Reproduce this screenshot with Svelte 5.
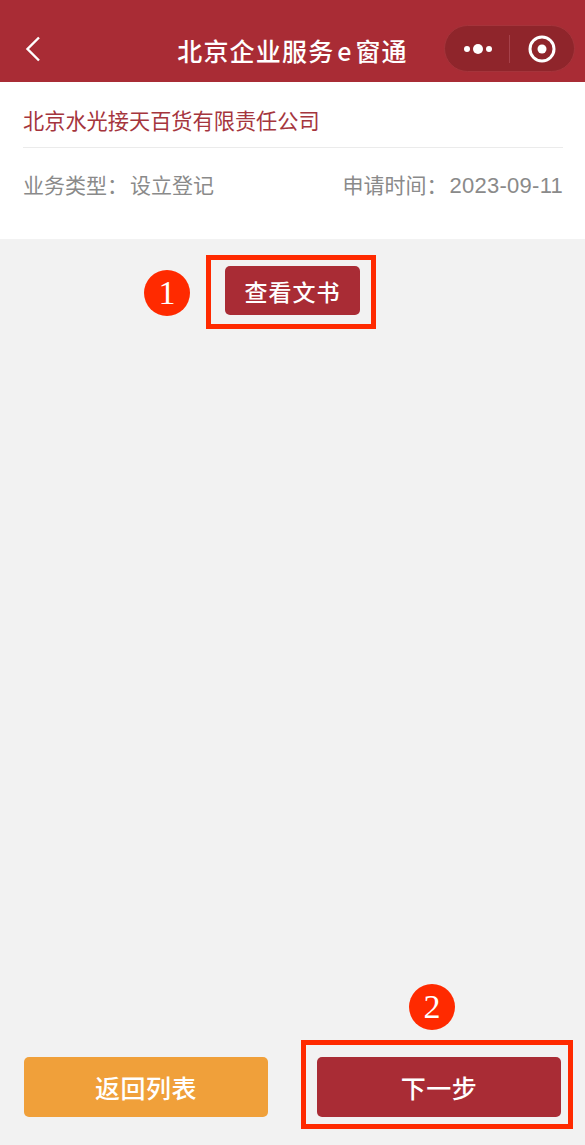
<script>
  const pageTitle = '北京企业服务';
</script>

<div class="page">
  <header class="nav">
    <svg class="back" viewBox="0 0 16 26" width="16" height="26" aria-hidden="true">
      <path d="M14 1.5 L2.5 13 L14 24.5" fill="none" stroke="#fff" stroke-width="2.4" />
    </svg>
    <h1 class="title">{pageTitle} e 窗通</h1>
    <div class="capsule">
      <svg class="dots" viewBox="0 0 32 12" width="32" height="12" aria-hidden="true">
        <circle cx="3" cy="6" r="3" fill="#fff" />
        <circle cx="14" cy="6" r="5" fill="#fff" />
        <circle cx="25" cy="6" r="3" fill="#fff" />
      </svg>
      <span class="sep"></span>
      <svg class="target" viewBox="0 0 28 28" width="28" height="28" aria-hidden="true">
        <circle cx="14" cy="14" r="12" fill="none" stroke="#fff" stroke-width="3" />
        <circle cx="14" cy="14" r="4.5" fill="#fff" />
      </svg>
    </div>
  </header>

  <section class="info">
    <div class="company">北京水光接天百货有限责任公司</div>
    <div class="meta">
      <span class="field"><span class="label">业务类型：</span><span>设立登记</span></span>
      <span class="field"><span class="label">申请时间：</span><span class="date">2023-09-11</span></span>
    </div>
  </section>

  <main class="content">
    <div class="doc-wrap">
      <button class="btn doc">查看文书</button>
      <span class="mark mark-doc"></span>
      <span class="badge badge-doc">1</span>
    </div>
  </main>

  <footer class="actions">
    <button class="btn large orange">返回列表</button>
    <div class="next-wrap">
      <button class="btn large next">下一步</button>
      <span class="mark mark-next"></span>
      <span class="badge badge-next">2</span>
    </div>
  </footer>
</div>

<style>
  :global(body) {
    margin: 0;
    background: #f2f2f2;
  }

  .page {
    width: 585px;
    height: 1145px;
    display: flex;
    flex-direction: column;
    overflow: hidden;
    background: #f2f2f2;
    font-family: "Noto Sans CJK SC", "Liberation Sans", sans-serif;
  }

  .nav {
    height: 82px;
    flex: none;
    position: relative;
    display: flex;
    align-items: center;
    justify-content: space-between;
    box-sizing: border-box;
    padding: 16px 10px 0 25px;
    background: #a92c35;
    color: #fff;
  }

  .title {
    position: absolute;
    left: 0;
    right: 0;
    top: 34px;
    margin: 0;
    text-align: center;
    font-size: 25px;
    font-weight: 500;
    letter-spacing: 1.2px;
    word-spacing: -4px;
    line-height: 32px;
  }

  .capsule {
    position: relative;
    width: 131px;
    height: 47px;
    margin-top: -1px;
    box-sizing: border-box;
    display: flex;
    align-items: center;
    padding-left: 19px;
    border-radius: 24px;
    background: #8f252b;
    border: 1px solid #a5343b;
  }

  .sep {
    width: 1px;
    height: 28px;
    margin-left: 13px;
    background: #a6414a;
  }

  .target {
    margin-left: 18px;
  }

  .info {
    flex: none;
    height: 157px;
    box-sizing: border-box;
    padding: 0 22px 0 23px;
    background: #fff;
  }

  .company {
    box-sizing: border-box;
    height: 66px;
    line-height: 75px;
    overflow: hidden;
    font-size: 21.2px;
    color: #a5353d;
    border-bottom: 1.5px solid #ebebeb;
  }

  .meta {
    display: flex;
    justify-content: space-between;
    margin-top: 20px;
    font-size: 21px;
    line-height: 32px;
    color: #8a8a8a;
  }

  .field {
    display: flex;
    align-items: baseline;
  }

  .label {
    width: 107px;
  }

  .date {
    font-family: "Liberation Sans", sans-serif;
    font-size: 22px;
    letter-spacing: 0.25px;
  }

  .content {
    flex: 1;
    display: flex;
    justify-content: center;
    align-items: flex-start;
    padding-top: 27px;
  }

  .doc-wrap,
  .next-wrap {
    position: relative;
  }

  .btn {
    display: block;
    margin: 0;
    border: 0;
    padding: 0;
    color: #fff;
    font-family: inherit;
    font-weight: 500;
    border-radius: 5px;
  }

  .doc {
    width: 135px;
    height: 49px;
    background: #a92c35;
    font-size: 23px;
    letter-spacing: 1px;
  }

  .actions {
    flex: none;
    display: flex;
    justify-content: space-between;
    padding: 0 24px 28px;
  }

  .large {
    width: 244px;
    height: 60px;
    font-size: 25px;
    letter-spacing: 0.5px;
  }

  .orange {
    background: #f0a03a;
  }

  .next {
    background: #a92c35;
  }

  .mark {
    position: absolute;
    box-sizing: border-box;
    border: 5px solid #ff2a00;
    pointer-events: none;
  }

  .mark-doc {
    left: -19px;
    top: -11px;
    width: 170px;
    height: 74px;
  }

  .mark-next {
    left: -16px;
    top: -17px;
    width: 272px;
    height: 89px;
  }

  .badge {
    position: absolute;
    width: 46px;
    height: 46px;
    border-radius: 50%;
    display: flex;
    align-items: center;
    justify-content: center;
    background: #ff2a00;
    color: #fff;
    font-family: "Liberation Serif", serif;
    font-size: 34px;
    line-height: 1;
  }

  .badge-doc {
    left: -81px;
    top: 4px;
  }

  .badge-next {
    left: 92px;
    top: -73px;
  }
</style>
